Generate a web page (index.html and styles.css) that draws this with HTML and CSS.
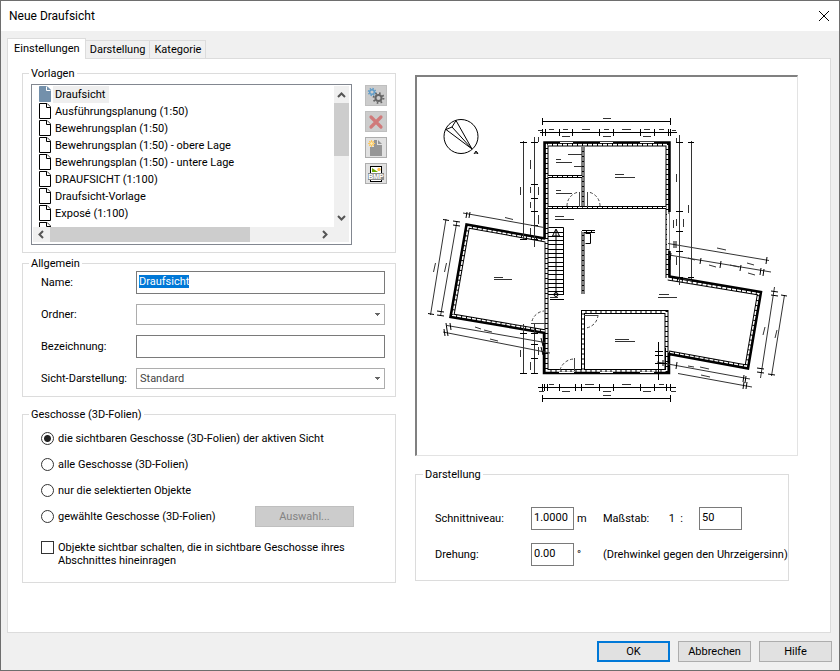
FILE: index.html
```html
<!DOCTYPE html>
<html lang="de">
<head>
  <meta charset="UTF-8" />
  <meta name="viewport" content="width=device-width, initial-scale=1.0"/>
  <title>Neue Draufsicht</title>
  <link rel="stylesheet" href="styles.css">
</head>
<body>

<form class="dialog" id="dialog">

  <!-- TITLE BAR -->
  <header class="titlebar">
    <h1>Neue Draufsicht</h1>
    <button type="button" class="close" aria-label="Schließen">
      <svg width="12" height="12" viewBox="0 0 12 12"><path d="M1 1L11 11M11 1L1 11" stroke="#000" fill="none"/></svg>
    </button>
  </header>

  <!-- TABS -->
  <div class="tabs" role="tablist">
    <button type="button" class="tab active" role="tab" aria-selected="true">Einstellungen</button>
    <button type="button" class="tab" role="tab">Darstellung</button>
    <button type="button" class="tab" role="tab">Kategorie</button>
  </div>

  <main class="panel">
    <div class="column">

      <!-- Vorlagen -->
      <fieldset class="templates">
        <legend>Vorlagen</legend>
        <div class="listbox">
          <ul role="listbox" aria-label="Vorlagen">
            <li role="option" class="selected" aria-selected="true"><svg class="doc"><use href="#doc"/></svg><span>Draufsicht</span></li>
            <li role="option"><svg class="doc"><use href="#doc"/></svg><span>Ausführungsplanung (1:50)</span></li>
            <li role="option"><svg class="doc"><use href="#doc"/></svg><span>Bewehrungsplan (1:50)</span></li>
            <li role="option"><svg class="doc"><use href="#doc"/></svg><span>Bewehrungsplan (1:50) - obere Lage</span></li>
            <li role="option"><svg class="doc"><use href="#doc"/></svg><span>Bewehrungsplan (1:50) - untere Lage</span></li>
            <li role="option"><svg class="doc"><use href="#doc"/></svg><span>DRAUFSICHT (1:100)</span></li>
            <li role="option"><svg class="doc"><use href="#doc"/></svg><span>Draufsicht-Vorlage</span></li>
            <li role="option"><svg class="doc"><use href="#doc"/></svg><span>Exposé (1:100)</span></li>
            <li role="option"><svg class="doc"><use href="#doc"/></svg></li>
          </ul>
          <div class="scroll-v">
            <svg width="15" height="17" viewBox="0 0 15 17"><path d="M4 11L7.500 7.500L11 11" class="chevron"/></svg>
            <div class="thumb"></div>
            <svg width="15" height="17" viewBox="0 0 15 17"><path d="M4 6L7.500 9.500L11 6" class="chevron"/></svg>
          </div>
          <div class="scroll-h">
            <svg width="17" height="15" viewBox="0 0 17 15"><path d="M10 4L6.500 7.500L10 11" class="chevron"/></svg>
            <div class="thumb"></div>
            <svg width="17" height="15" viewBox="0 0 17 15"><path d="M6 4L9.500 7.500L6 11" class="chevron"/></svg>
          </div>
          <div class="corner"></div>
        </div>
        <div class="tools">
          <button type="button" disabled aria-label="Eigenschaften">
            <svg width="20" height="19" viewBox="1 1 20 19" fill="none">
              <circle cx="7" cy="7" r="2.300" stroke="#5f9cc8" stroke-width="1.400"/>
              <circle cx="7" cy="7" r="3.500" stroke="#5f9cc8" stroke-width="1.400" stroke-dasharray="1.370 1.380"/>
              <circle cx="13.500" cy="13" r="3" stroke="#666" stroke-width="2"/>
              <circle cx="13.500" cy="13" r="4.900" stroke="#666" stroke-width="2" stroke-dasharray="1.600 2.248"/>
            </svg>
          </button>
          <button type="button" disabled aria-label="Löschen">
            <svg width="20" height="19" viewBox="1 1 20 19"><path d="M6 6L16 16M16 6L6 16" stroke="#d07a7a" stroke-width="3.200" stroke-linecap="round"/></svg>
          </button>
          <button type="button" aria-label="Neue Vorlage">
            <svg width="20" height="19" viewBox="1 1 20 19">
              <path d="M5 10h4V3h3v5h5v11H5z" fill="#969696"/>
              <path d="M13 3l4 4h-4z" fill="#969696"/>
              <path d="M6.500 3v7M3 6.500h7M4 4l5 5M9 4L4 9" stroke="#ffc95c"/>
              <circle cx="6.500" cy="6.500" r="1.800" fill="#fff0b8" stroke="#ffc04d"/>
            </svg>
          </button>
          <button type="button" aria-label="Als Bitmap speichern">
            <svg width="20" height="19" viewBox="1 1 20 19">
              <rect x="5.500" y="3.500" width="11" height="15" fill="#fff" stroke="#000"/>
              <path d="M7 5v4h6z" fill="#6aa800"/>
              <circle cx="14" cy="6.500" r="1.700" fill="#ffc04d"/>
              <rect x="3" y="10" width="16" height="7" fill="#8c8c8c"/>
              <text x="11" y="16" class="bmp">BMP</text>
            </svg>
          </button>
        </div>
      </fieldset>

      <!-- Allgemein -->
      <fieldset class="general">
        <legend>Allgemein</legend>
        <div class="fields">
          <label for="name">Name:</label>
          <input type="text" id="name" value="Draufsicht">
          <label for="ordner">Ordner:</label>
          <select id="ordner"><option></option></select>
          <label for="bezeichnung">Bezeichnung:</label>
          <input type="text" id="bezeichnung">
          <label for="sicht">Sicht-Darstellung:</label>
          <select id="sicht"><option>Standard</option></select>
        </div>
      </fieldset>

      <!-- Geschosse -->
      <fieldset class="storeys">
        <legend>Geschosse (3D-Folien)</legend>
        <label class="choice"><input type="radio" name="geschosse" checked>die sichtbaren Geschosse (3D-Folien) der aktiven Sicht</label>
        <label class="choice"><input type="radio" name="geschosse">alle Geschosse (3D-Folien)</label>
        <label class="choice"><input type="radio" name="geschosse">nur die selektierten Objekte</label>
        <div class="choice-row">
          <label class="choice"><input type="radio" name="geschosse">gewählte Geschosse (3D-Folien)</label>
          <button type="button" class="btn select-btn" disabled>Auswahl...</button>
        </div>
        <label class="choice check"><input type="checkbox"><span>Objekte sichtbar schalten, die in sichtbare Geschosse ihres Abschnittes hineinragen</span></label>
      </fieldset>
    </div>

    <div class="column">

      <!-- Vorschau -->
      <div class="preview">
        <svg viewBox="417 77 380 378" role="img" aria-label="Grundriss" fill="none" stroke="#000">
          <!-- Nordpfeil -->
          <circle cx="461" cy="136.500" r="17"/>
          <path d="M472 149L446 129.500L452 127L456 120.500ZM472 149L452 127M474 154l2-3 2 3M475 153h3"/>

          <!-- Wände, schraffiert -->
          <g stroke-width="4">
            <path id="walls" d="M546.500 373V144.500H667.500V278M546.500 371H666.500V312H583V371M468 226.500L546 240.500M468 226.500L452.500 315.500L546 331.500M668 278.500L759 293.500L746.500 366.500L669 352.500"/>
          </g>
          <g stroke-width="3">
            <path id="partitions" d="M583 147V207.500M548 176.500H582M548 207.500H666M583 231V294M582 231.500H595"/>
          </g>
          <g stroke="#fff" stroke-width="2" stroke-dasharray="4 1"><use href="#walls"/></g>
          <g stroke="#fff" stroke-width="1" stroke-dasharray="4 1"><use href="#partitions"/></g>

          <!-- Außenkante -->
          <path stroke-width="2.500" d="M545 238.500L466.500 224.500L450.500 317L545 333M544.500 238V142.500H669.500V212M669.500 251V276.500L761 292L748 368.500L669 354V373H544V332"/>
          <path stroke="#fff" stroke-width="1" d="M560 142.500h13M600 142.500h13M640 142.500h14M600 372.500h13M640 372.500h14M559 372.500h15"/>
          <path stroke="#fff" stroke-width="2" d="M668 214V249"/>

          <!-- Treppe -->
          <path d="M548.500 227.500H563.500V294M556 230V294M548 294.500H564M548 232.500h15M548 236.500h15M548 240.500h15M548 244.500h15M548 249.500h15M548 253.500h15M548 257.500h15M548 262.500h15M548 266.500h15M548 270.500h15M548 274.500h15M548 279.500h15M548 283.500h15M548 287.500h15M548 291.500h15M552.500 236L556 229L559.500 236Z"/>
          <circle cx="556" cy="294.500" r="2"/>
          <path d="M585.500 233.500h5v10h-5M550 299.500h14"/>

          <!-- Türen -->
          <g stroke="#444">
            <path stroke-dasharray="3 2" d="M567 206A14 14 0 0 1 579 192M600 206A14 14 0 0 0 588 192M532 321A14 14 0 0 1 544 311M598 315A14 14 0 0 1 586 328M560 370A15 15 0 0 1 574 359"/>
            <path d="M579.500 192V207M587.500 192V207M531 323.500H545M584 315.500h14M574.500 358V371"/>
          </g>

          <!-- Maßketten -->
          <path d="M542 121.500H671M540 132.500H677M538 387.500H676M542 398.500H671M542.500 118v7M670.500 118v7M542.500 395v7M670.500 395v7"/>
          <path d="M542.500 129v7M545.500 129v7M559.500 129v7M572.500 129v7M599.500 129v7M613.500 129v7M640.500 129v7M654.500 129v7M668.500 129v7M670.500 129v7"/>
          <path d="M542.500 384v7M544.500 384v7M547.500 384v7M559.500 384v7M575.500 384v7M581.500 384v7M599.500 384v7M613.500 384v7M640.500 384v7M654.500 384v7M666.500 384v7M670.500 384v7"/>
          <path stroke="#333" d="M523.500 141V240M534.500 137V247M523.500 324V374M534.500 324V374M679.500 135V285M691.500 141V279"/>
          <path d="M520 142.500h7M520 239.500h7M531 142.500h7M531 184.500h7M531 198.500h7M531 211.500h7M531 225.500h7M531 239.500h7M520 333.500h7M531 333.500h7M531 344.500h7M531 358.500h7M520 373.500h7M531 373.500h7M676 142.500h7M688 142.500h6M676 211.500h7M676 231.500h7M676 251.500h7M676 277.500h7M688 277.500h6"/>
          <path stroke="#333" d="M463 213L544 227.500M446 219L430.500 315M457 221L440.500 316M447 325.500L545 342.500M443 332L550 353M668 243.500L769 260.500M669 255L771 272M774.500 287L760.500 378M784.500 295L771.500 376M657 362L750 379M678 373.500L752 387"/>
          <path d="M467 212l-1 6M470 212l-1 6M443 219.500l6 1M453 221l7 1M453 225l7 1M428 313.500l6 1M437 311l7 1M437 315l7 1M446 323l1 7M450 323l1 7M444 329l1 7M447 330l1 6M541 338l2 8M541 347l2 8M674 241v7M676 241v7M767 257l-1 7M671 253l-1 7M701 258l-1 6M721 261l-1 7M741 265l-1 6M761 268l-1 7M764 269l-1 7M771 291l7 1M771 295l7 1M781 295l6 1M757 368l7 1M757 372l7 1M768 374l7 1M663 360v6M677 362l-1 7M744 375l-1 7M746 376l-1 7M744 382l-1 7M747 382l-1 7"/>

          <!-- Beschriftungen -->
          <path stroke="#333" d="M603 118.500h8M549 129.500h5M563 129.500h5M582 129.500h8M604 129.500h5M622 129.500h9M644 129.500h6M659 129.500h5M672 130.500h4M562 136.500h8M603 136.500h8M643 136.500h8M538 130.500h4"/>
          <path stroke="#333" d="M549 384.500h5M562 391.500h8M585 384.500h9M603 391.500h8M622 384.500h9M643 391.500h8M603 395.500h8M659 384.500h5M539 391.500h5M671 391.500h5"/>
          <path stroke="#333" d="M520.500 187v8M530.500 160v9M530.500 187v6M538.500 187v8M530.500 202v6M538.500 215v9M530.500 228v7M538.500 137v5M520.500 350v7M530.500 362v8M538.500 347v8M676.500 174v8M688.500 205v8M676.500 219v7M683.500 219v8M676.500 257v8M676.500 138v4M673.500 220v8"/>
          <path stroke="#333" d="M505 217.500l8 2M433.500 272l2-9M444.500 272l2-9M484 330l8 2M490 339l8 2M475 327l6 2M717 248l9 2M688 258l7 2M709 265l7 2M730 265l9 2M748 273l7 2M747 263l7 2M763 335l2-8M775 338l2-8M700 367l9 2M701 375l9 2M683 279l9 2M688 366l6 1"/>
          <path stroke="#333" d="M568 154.500h14M556 159.500h5M556 162.500h16M574 166.500h8M556 190.500h5M556 193.500h16M555 216.500h9M555 219.500h19M615 174.500h9M615 177.500h20M494 277.500h9M494 279.500h18M659 294.500h10M658 297.500h19M615 339.500h14M615 341.500h20M550 297.500h8"/>
          <path d="M658.500 342v38M655 351.500h8M655 355.500h8M655 363.500h12M665.500 348v22"/>
        </svg>
      </div>

      <!-- Darstellung -->
      <fieldset class="display">
        <legend>Darstellung</legend>
        <div class="display-grid">
          <label for="niveau">Schnittniveau:</label>
          <input type="text" id="niveau" value="1.0000">
          <span class="unit">m</span>
          <label for="massstab" class="scale">Maßstab: <span>1&nbsp; :</span></label>
          <input type="text" id="massstab" value="50">
          <label for="drehung">Drehung:</label>
          <input type="text" id="drehung" value="0.00">
          <span class="unit">°</span>
          <span class="hint">(Drehwinkel gegen den Uhrzeigersinn)</span>
        </div>
      </fieldset>
    </div>
  </main>

  <footer class="actions">
    <button type="submit" class="btn primary">OK</button>
    <button type="button" class="btn">Abbrechen</button>
    <button type="button" class="btn">Hilfe</button>
  </footer>
</form>

<svg class="symbols" width="0" height="0" aria-hidden="true">
  <symbol id="doc" viewBox="0 0 12 16">
    <path d="M.5 .5H8L11.500 4V15.500H.5Z" class="sheet"/>
    <path d="M7.500 .5V4.500H11.500" class="fold"/>
  </symbol>
</svg>

<script>
  // Name is preselected so it can be overwritten right away
  const nameField = document.getElementById('name');
  nameField.focus();
  nameField.select();

  document.getElementById('dialog').addEventListener('submit', (e) => {
    e.preventDefault();
  });
</script>
</body>
</html>
```
FILE: styles.css
```css
* {
  margin: 0;
  padding: 0;
  box-sizing: border-box;
}

body, button, input, select {
  font-family: Roboto, "Liberation Sans", sans-serif;
  font-size: 11px;
  line-height: 15px;
  color: #000;
}

.dialog {
  min-height: 100vh;
  display: flex;
  flex-direction: column;
  background: #f0f0f0;
  border: 1px solid #6e6e6e;
}

/* Title bar */
.titlebar {
  height: 30px;
  padding: 0 9px 0 8px;
  display: flex;
  justify-content: space-between;
  align-items: center;
  background: #fff;
}

.titlebar h1 {
  font-size: 12px;
  font-weight: normal;
}

.close {
  display: flex;
  border: 0;
  background: none;
}

/* Tabs */
.tabs {
  display: flex;
  align-items: flex-end;
  padding: 7px 0 0 6px;
}

.tab {
  height: 18px;
  padding: 0 4px;
  border: 1px solid #dcdcdc;
  border-bottom: 0;
  border-left: 0;
  background: #f0f0f0;
}

.tab.active {
  height: 21px;
  margin-bottom: -1px;
  padding: 0 5px 2px 6px;
  border-left: 1px solid #dcdcdc;
  background: #fff;
  position: relative;
}

.panel {
  flex: 1;
  display: grid;
  grid-template-columns: 374fr 383fr;
  gap: 19px;
  margin: 0 8px 0 6px;
  padding: 7px 32px 16px 14px;
  border: 1px solid #dcdcdc;
  background: #fff;
}

fieldset {
  min-width: 0;
  border: 1px solid #dcdcdc;
}

legend {
  height: 15px;
  margin-left: -12px;
  padding: 0 2px;
}

/* Vorlagen */
.templates {
  display: flex;
  gap: 13px;
  padding: 3px 8px 7px 8px;
}

.templates legend {
  margin-left: -2px;
}

.listbox {
  flex: 1;
  height: 161px;
  display: grid;
  grid-template-columns: 1fr 15px;
  grid-template-rows: 1fr 15px;
  padding: 1px 2px 2px 1px;
  border: 1px solid #828790;
}

.listbox ul {
  min-height: 0;
  overflow: hidden;
  list-style: none;
}

.listbox li {
  height: 17px;
  display: flex;
  gap: 2px;
  padding-left: 6px;
}

.listbox li span {
  padding: 1px 4px 0 2px;
}

.listbox .selected span {
  background: #efefef;
}

.doc {
  width: 12px;
  height: 16px;
}

.selected .doc {
  --sheet: #7390ab;
  --line: #7390ab;
  --fold: #fff;
}

.sheet {
  fill: var(--sheet, #fff);
  stroke: var(--line, #000);
}

.fold {
  fill: var(--sheet, #fff);
  stroke: var(--fold, #000);
}

.scroll-v, .scroll-h {
  display: flex;
  justify-content: space-between;
  background: #f0f0f0;
}

.scroll-v {
  flex-direction: column;
}

.thumb {
  background: #cdcdcd;
}

.scroll-v .thumb {
  height: 53px;
  margin-bottom: auto;
}

.scroll-h .thumb {
  width: 200px;
  margin-right: auto;
}

.corner {
  background: #f0f0f0;
}

.chevron {
  fill: none;
  stroke: #555;
  stroke-width: 2;
}

.tools {
  display: flex;
  flex-direction: column;
  gap: 5px;
  padding-top: 1px;
}

.tools button {
  width: 22px;
  height: 21px;
  border: 1px solid #adadad;
  background: #e1e1e1;
}

.tools button:disabled {
  border-color: #bfbfbf;
  background: #ccc;
}

.tools svg {
  display: block;
}

.bmp {
  fill: #fff;
  stroke: none;
  font: bold 7px "Liberation Sans", sans-serif;
  text-anchor: middle;
}

/* Allgemein */
.general {
  margin-top: 3px;
  padding: 0 10px 7px 18px;
}

.fields {
  display: grid;
  grid-template-columns: 95px 1fr;
  align-items: center;
  row-gap: 10px;
  white-space: nowrap;
}

input[type="text"], select {
  width: 100%;
  height: 23px;
  padding: 0 2px 2px;
  border: 1px solid #7a7a7a;
  border-radius: 0;
  background: #fff;
  outline: 0;
}

select {
  height: 21px;
  padding: 0 3px;
  border-color: #adadad;
  appearance: none;
  color: #444;
  background: linear-gradient(#666, #666) right 4px top 8px / 5px 1px no-repeat,
    linear-gradient(#666, #666) right 5px top 9px / 3px 1px no-repeat,
    linear-gradient(#666, #666) right 6px top 10px / 1px 1px no-repeat, #fff;
}

::selection {
  background: #0078d7;
  color: #fff;
}

/* Geschosse */
.storeys {
  margin-top: 10px;
  padding: 3px 18px 15px;
}

.choice {
  height: 26px;
  display: flex;
  align-items: center;
  gap: 4px;
}

.choice-row {
  display: flex;
  justify-content: space-between;
  align-items: center;
  padding-right: 23px;
}

.choice input {
  flex: none;
  width: 13px;
  height: 13px;
  appearance: none;
  border: 1px solid #333;
  background: #fff;
}

.choice input[type="radio"] {
  border-radius: 50%;
}

.choice input[type="radio"]:checked {
  background: radial-gradient(circle, #222 3px, #fff 4px);
}

.choice.check {
  margin-top: 12px;
  align-items: flex-start;
  line-height: 13px;
}

.check span {
  max-width: 300px;
}

.btn {
  width: 73px;
  height: 21px;
  border: 1px solid #adadad;
  background: #e1e1e1;
}

.btn.primary {
  border: 2px solid #0078d7;
}

.select-btn {
  width: 99px;
}

.btn:disabled {
  border-color: #bfbfbf;
  background: #ccc;
  color: #838383;
}

/* Vorschau */
.preview {
  margin-top: 9px;
  border: 1px solid #e3e3e3;
  border-top: 2px solid #808080;
  border-left: 2px solid #808080;
}

.preview svg {
  display: block;
  width: 100%;
}

/* Darstellung */
.display {
  margin: 11px 9px 0 0;
  padding: 25px 5px 14px 19px;
}

.display-grid {
  display: grid;
  grid-template-columns: 96px 43px 29px 96px 43px;
  align-items: center;
  row-gap: 13px;
  white-space: nowrap;
}

.unit {
  padding-left: 3px;
}

.scale {
  display: flex;
  justify-content: space-between;
  padding-right: 16px;
}

.hint {
  grid-column: span 2;
}

.actions {
  display: flex;
  justify-content: flex-end;
  gap: 8px;
  padding: 8px 7px 8px;
}
```
